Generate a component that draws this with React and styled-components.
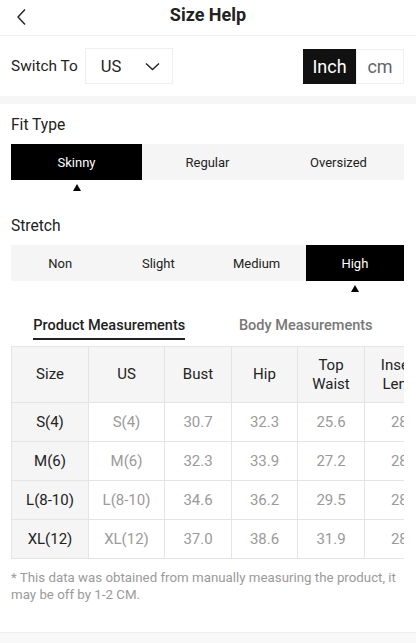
import React, { useState } from "react";
import styled, { createGlobalStyle } from "styled-components";

const GlobalStyle = createGlobalStyle`
  html, body {
    margin: 0;
    padding: 0;
    background: #fff;
    font-family: Roboto, "Liberation Sans", Arial, sans-serif;
    color: #222;
  }
  * { box-sizing: border-box; }
`;

const fitTypes = ["Skinny", "Regular", "Oversized"];
const stretches = ["Non", "Slight", "Medium", "High"];

const columns = [
  { key: "size", label: "Size", width: 77 },
  { key: "us", label: "US", width: 76 },
  { key: "bust", label: "Bust", width: 67 },
  { key: "hip", label: "Hip", width: 66 },
  { key: "waist", label: ["Top", "Waist"], width: 67 },
  { key: "inseam", label: ["Inseam", "Length"], width: 82 },
];

const rows = [
  { size: "S(4)", us: "S(4)", bust: "30.7", hip: "32.3", waist: "25.6", inseam: "28.3" },
  { size: "M(6)", us: "M(6)", bust: "32.3", hip: "33.9", waist: "27.2", inseam: "28.3" },
  { size: "L(8-10)", us: "L(8-10)", bust: "34.6", hip: "36.2", waist: "29.5", inseam: "28.3" },
  { size: "XL(12)", us: "XL(12)", bust: "37.0", hip: "38.6", waist: "31.9", inseam: "28.3" },
];

const BackIcon = () => (
  <svg width="12" height="18" viewBox="0 0 12 18" fill="none">
    <polyline points="9,1.5 2,9 9,16.5" stroke="#222" strokeWidth="1.4" strokeLinejoin="round" />
  </svg>
);

const ChevronDown = () => (
  <svg width="15" height="9" viewBox="0 0 15 9" fill="none">
    <polyline points="1,1.5 7.5,7.5 14,1.5" stroke="#222" strokeWidth="1.4" />
  </svg>
);

export default function App() {
  const [unit, setUnit] = useState("Inch");
  const [fit, setFit] = useState("Skinny");
  const [stretch, setStretch] = useState("High");
  const [tab, setTab] = useState("product");

  return (
    <Page>
      <GlobalStyle />
      <Header>
        <BackButton>
          <BackIcon />
        </BackButton>
        <Title>Size Help</Title>
        <span />
      </Header>

      <SwitchRow>
        <SwitchGroup>
          <SwitchLabel>Switch To</SwitchLabel>
          <Select>
            <span>US</span>
            <ChevronDown />
          </Select>
        </SwitchGroup>
        <UnitToggle>
          {["Inch", "cm"].map((u) => (
            <UnitButton key={u} $active={unit === u} onClick={() => setUnit(u)}>
              {u}
            </UnitButton>
          ))}
        </UnitToggle>
      </SwitchRow>

      <Band />

      <Section>
        <SectionLabel $top={11}>Fit Type</SectionLabel>
        <Segments $count={fitTypes.length}>
          {fitTypes.map((f) => (
            <Option key={f} onClick={() => setFit(f)}>
              <Segment $active={fit === f}>{f}</Segment>
              <Marker $visible={fit === f} />
            </Option>
          ))}
        </Segments>

        <SectionLabel $top={25}>Stretch</SectionLabel>
        <Segments $count={stretches.length}>
          {stretches.map((s) => (
            <Option key={s} onClick={() => setStretch(s)}>
              <Segment $active={stretch === s}>{s}</Segment>
              <Marker $visible={stretch === s} />
            </Option>
          ))}
        </Segments>

        <Tabs>
          <Tab $active={tab === "product"} onClick={() => setTab("product")}>
            <span>Product Measurements</span>
          </Tab>
          <Tab $active={tab === "body"} onClick={() => setTab("body")}>
            <span>Body Measurements</span>
          </Tab>
        </Tabs>

        <TableWrap>
          <Table>
            <thead>
              <tr>
                {columns.map((c) => (
                  <HeadCell key={c.key} $width={c.width}>
                    {Array.isArray(c.label)
                      ? c.label.map((l) => <div key={l}>{l}</div>)
                      : c.label}
                  </HeadCell>
                ))}
              </tr>
            </thead>
            <tbody>
              {rows.map((r) => (
                <tr key={r.size}>
                  {columns.map((c, i) => (
                    <Cell key={c.key} $first={i === 0}>
                      {r[c.key]}
                    </Cell>
                  ))}
                </tr>
              ))}
            </tbody>
          </Table>
        </TableWrap>

        <Note>
          * This data was obtained from manually measuring the product, it may
          be off by 1-2 CM.
        </Note>
      </Section>

      <BottomBand />
    </Page>
  );
}

const Page = styled.div`
  width: 416px;
  min-height: 643px;
  overflow: hidden;
`;

const Header = styled.header`
  height: 36px;
  display: grid;
  grid-template-columns: 1fr auto 1fr;
  align-items: center;
  border-bottom: 1px solid #f1f1f1;
`;

const BackButton = styled.div`
  display: flex;
  align-items: center;
  padding-left: 16px;
  padding-bottom: 2px;
`;

const Title = styled.h1`
  margin: 0;
  font-size: 18px;
  font-weight: 700;
  color: #222;
  padding-bottom: 6px;
`;

const SwitchRow = styled.div`
  height: 60px;
  display: flex;
  align-items: center;
  justify-content: space-between;
  padding: 0 12px 0 11px;
`;

const SwitchGroup = styled.div`
  display: flex;
  align-items: center;
  gap: 7px;
`;

const SwitchLabel = styled.span`
  font-size: 15.4px;
  color: #222;
`;

const Select = styled.div`
  width: 88px;
  height: 36px;
  border: 1px solid #efefef;
  display: flex;
  align-items: center;
  justify-content: space-between;
  padding: 0 12px 0 15px;
  font-size: 16.5px;
  color: #222;
`;

const UnitToggle = styled.div`
  display: flex;
  height: 35px;
`;

const UnitButton = styled.div`
  width: ${(p) => (p.$active ? "53px" : "48px")};
  display: flex;
  align-items: center;
  justify-content: center;
  font-size: 18px;
  background: ${(p) => (p.$active ? "#111" : "#fff")};
  color: ${(p) => (p.$active ? "#fff" : "#666")};
  border: 1px solid ${(p) => (p.$active ? "#111" : "#f0f0f0")};
  cursor: pointer;
`;

const Band = styled.div`
  height: 8px;
  background: #f6f6f6;
`;

const BottomBand = styled.div`
  margin-top: 29px;
  height: 12px;
  border-top: 1px solid #efefef;
  background: #f8f8f8;
`;

const Section = styled.section`
  padding: 0 12px 0 11px;
`;

const SectionLabel = styled.div`
  margin-top: ${(p) => p.$top}px;
  height: 20px;
  line-height: 20px;
  font-size: 15.6px;
  color: #222;
  margin-bottom: 9px;
`;

const Segments = styled.div`
  display: grid;
  grid-template-columns: repeat(${(p) => p.$count}, 1fr);
  background: linear-gradient(#f5f5f5, #f5f5f5) top / 100% 36px no-repeat;
`;

const Option = styled.div`
  display: flex;
  flex-direction: column;
  align-items: center;
  cursor: pointer;
`;

const Segment = styled.div`
  width: 100%;
  height: 36px;
  display: flex;
  align-items: center;
  justify-content: center;
  font-size: 13px;
  background: ${(p) => (p.$active ? "#000" : "transparent")};
  color: ${(p) => (p.$active ? "#fff" : "#222")};
`;

const Marker = styled.div`
  margin-top: 4px;
  width: 0;
  height: 0;
  border-left: 4px solid transparent;
  border-right: 4px solid transparent;
  border-bottom: 7px solid ${(p) => (p.$visible ? "#000" : "transparent")};
`;

const Tabs = styled.div`
  margin-top: 24px;
  display: grid;
  grid-template-columns: 1fr 1fr;
`;

const Tab = styled.div`
  display: flex;
  justify-content: center;
  cursor: pointer;

  span {
    font-size: 14.5px;
    font-weight: 500;
    line-height: 20px;
    color: ${(p) => (p.$active ? "#222" : "#777")};
    padding-bottom: 2px;
    border-bottom: 2px solid ${(p) => (p.$active ? "#222" : "transparent")};
  }
`;

const TableWrap = styled.div`
  margin-top: 6px;
  overflow: hidden;
`;

const Table = styled.table`
  border-collapse: collapse;
  table-layout: fixed;
  font-size: 15px;
`;

const HeadCell = styled.th`
  width: ${(p) => p.$width}px;
  min-width: ${(p) => p.$width}px;
  height: 56px;
  background: #f5f5f5;
  border: 1px solid #e4e4e4;
  font-weight: 400;
  color: #222;
  line-height: 19px;
  text-align: center;
  padding: 0;
  white-space: nowrap;
`;

const Cell = styled.td`
  height: 39px;
  border: 1px solid #e4e4e4;
  text-align: center;
  padding: 0;
  white-space: nowrap;
  background: ${(p) => (p.$first ? "#f5f5f5" : "#fff")};
  color: ${(p) => (p.$first ? "#222" : "#9a9a9a")};
`;

const Note = styled.p`
  margin: 10px 0 0;
  font-size: 13.3px;
  line-height: 17px;
  color: #9a9a9a;
`;
